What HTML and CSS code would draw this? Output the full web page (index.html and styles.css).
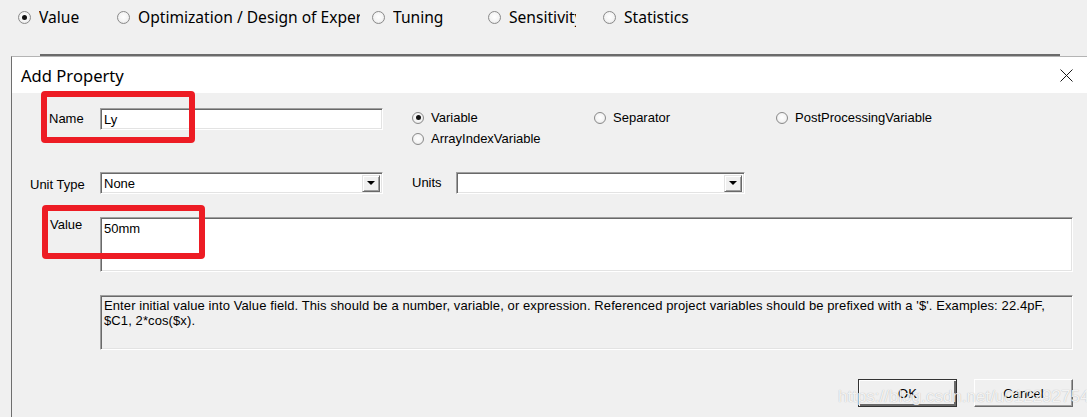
FILE: index.html
```html
<!DOCTYPE html>
<html>
<head>
<meta charset="utf-8">
<link rel="stylesheet" href="styles.css">
</head>
<body>
<div class="topbar">
  <div class="topitem w-value"><span class="tradio checked"></span><span class="tlabel l-value">Value</span></div>
  <div class="topitem w-opt"><span class="tradio"></span><span class="tlabel l-opt">Optimization / Design of Experiments</span></div>
  <div class="topitem w-tun"><span class="tradio"></span><span class="tlabel l-tun">Tuning</span></div>
  <div class="topitem w-sen"><span class="tradio"></span><span class="tlabel l-sen">Sensitivity</span></div>
  <div class="topitem"><span class="tradio"></span><span class="tlabel">Statistics</span></div>
</div>
<div class="backline"></div>
<div class="dialog">
  <div class="titlebar">
    <span class="title">Add Property</span>
    <svg class="close" width="13" height="13" viewBox="0 0 13 13"><path d="M0.5 0.5 L12.5 12.5 M12.5 0.5 L0.5 12.5" stroke="#1a1a1a" stroke-width="1" fill="none"/></svg>
  </div>
  <div class="body">
    <div class="row row1">
      <span class="lbl lbl-name">Name</span>
      <div class="field input w-name">Ly</div>
      <div class="radios">
        <div class="ritem"><span class="radio checked"></span>Variable</div>
        <div class="ritem"><span class="radio"></span>Separator</div>
        <div class="ritem"><span class="radio"></span>PostProcessingVariable</div>
        <div class="ritem"><span class="radio"></span>ArrayIndexVariable</div>
      </div>
    </div>
    <div class="row row2">
      <span class="lbl lbl-unit">Unit Type</span>
      <div class="field select w-name"><span class="seltext">None</span><span class="dd"><span class="tri"></span></span></div>
      <span class="lbl lbl-units">Units</span>
      <div class="field select w-units"><span class="seltext"></span><span class="dd"><span class="tri"></span></span></div>
    </div>
    <div class="row row3">
      <span class="lbl lbl-value">Value</span>
      <div class="field textarea">50mm</div>
    </div>
    <div class="help">Enter initial value into Value field. This should be a number, variable, or expression. Referenced project variables should be prefixed with a '$'. Examples: 22.4pF,<br>$C1, 2*cos($x).</div>
    <div class="buttons">
      <div class="btn default">OK</div>
      <div class="btn">Cancel</div>
    </div>
  </div>
  <div class="redbox rb1"></div>
  <div class="redbox rb2"></div>
  <div class="watermark">https://blog.csdn.net/u012292754</div>
</div>
</body>
</html>
```
FILE: styles.css
```css
html, body {
  margin: 0;
  padding: 0;
  background: #f0f0f0;
  width: 1087px;
  height: 417px;
  overflow: hidden;
}
.topbar {
  display: flex;
  align-items: center;
  height: 34px;
  padding-left: 18px;
  font-family: "Noto Sans", "Open Sans", sans-serif;
  font-size: 15.6px;
  color: #000;
}
.topitem {
  display: flex;
  align-items: center;
  white-space: nowrap;
}
.w-value { width: 99px; }
.w-opt { width: 255px; }
.w-tun { width: 116px; }
.w-sen { width: 115px; }
.tlabel {
  margin-left: 8px;
  overflow: hidden;
  display: block;
}
.l-opt { width: 222px; }
.l-sen { width: 67px; }
.tradio {
  width: 11px;
  height: 11px;
  border-radius: 50%;
  border: 1px solid #8a8a8a;
  background: radial-gradient(circle at 50% 45%, #ffffff 0%, #f4f4f4 55%, #d6d6d6 100%);
  position: relative;
  flex: none;
}
.tradio.checked::after,
.radio.checked::after {
  content: "";
  position: absolute;
  left: 3px;
  top: 3px;
  width: 5px;
  height: 5px;
  border-radius: 50%;
  background: #111;
}
.backline {
  margin-top: 20px;
  margin-left: 40px;
  width: 1020px;
  height: 2px;
  background: #6b6b6b;
}
.dialog {
  position: relative;
  margin-left: 11px;
  border-left: 1px solid #6e6e6e;
  border-top: 1px solid #b4b4b4;
  height: 360px;
  background: #f0f0f0;
}
.titlebar {
  height: 36px;
  background: #fff;
  display: flex;
  align-items: center;
  justify-content: space-between;
  padding-left: 9px;
  padding-right: 14px;
}
.title {
  font-family: "Noto Sans", "Open Sans", sans-serif;
  font-size: 16.6px;
  color: #000;
}
.body {
  font-family: "Liberation Sans", Arial, sans-serif;
  font-size: 13px;
  color: #000;
}
.row {
  display: flex;
  align-items: flex-start;
}
.row1 { margin-top: 15px; height: 41px; }
.row2 { margin-top: 23px; }
.row3 { margin-top: 23px; }
.lbl { display: block; }
.lbl-name { margin-left: 37px; width: 51px; padding-top: 3px; }
.lbl-unit { margin-left: 18px; width: 70px; padding-top: 5px; }
.lbl-units { margin-left: 29px; width: 44px; padding-top: 3px; }
.lbl-value { margin-left: 38px; width: 50px; padding-top: 0; }
.field {
  box-sizing: border-box;
  background: #fff;
  border-top: 1px solid #a0a0a0;
  border-left: 1px solid #a0a0a0;
  border-right: 1px solid #fff;
  border-bottom: 1px solid #fff;
  box-shadow: inset 1px 1px 0 #696969, inset -1px -1px 0 #e3e3e3;
}
.input {
  height: 22px;
  padding: 3px 3px 0 3px;
}
.w-name { width: 283px; }
.w-units { width: 289px; }
.select {
  height: 22px;
  display: flex;
  align-items: center;
  justify-content: space-between;
  padding: 0 2px 0 3px;
}
.dd {
  box-sizing: border-box;
  width: 18px;
  height: 17px;
  background: #f0f0f0;
  border-top: 1px solid #e3e3e3;
  border-left: 1px solid #e3e3e3;
  border-right: 1px solid #696969;
  border-bottom: 1px solid #696969;
  box-shadow: inset 1px 1px 0 #fff, inset -1px -1px 0 #a0a0a0;
  display: flex;
  align-items: center;
  justify-content: center;
}
.tri {
  width: 0;
  height: 0;
  border-left: 4px solid transparent;
  border-right: 4px solid transparent;
  border-top: 4px solid #000;
}
.radios {
  margin-left: 29px;
  margin-top: -1px;
  display: grid;
  grid-template-columns: 182px 182px auto;
  grid-auto-rows: 21px;
}
.ritem {
  display: flex;
  align-items: center;
  white-space: nowrap;
}
.radio {
  width: 10px;
  height: 10px;
  border-radius: 50%;
  border: 1px solid #8a8a8a;
  background: radial-gradient(circle at 50% 45%, #ffffff 0%, #f4f4f4 55%, #d6d6d6 100%);
  position: relative;
  margin-right: 7px;
  flex: none;
}
.radio.checked::after {
  left: 2.5px;
  top: 2.5px;
}
.textarea {
  width: 973px;
  height: 55px;
  padding: 3px 3px;
}
.help {
  box-sizing: border-box;
  margin-top: 23px;
  margin-left: 88px;
  width: 973px;
  height: 55px;
  padding: 2px 3px;
  font-size: 13px;
  letter-spacing: 0.1px;
  line-height: 15px;
  white-space: nowrap;
  border-top: 1px solid #a0a0a0;
  border-left: 1px solid #a0a0a0;
  border-right: 1px solid #fff;
  border-bottom: 1px solid #fff;
  box-shadow: inset 1px 1px 0 #696969, inset -1px -1px 0 #e3e3e3;
}
.buttons {
  display: flex;
  margin-top: 29px;
  margin-left: 846px;
  gap: 17px;
}
.btn {
  box-sizing: border-box;
  width: 99px;
  height: 28px;
  display: flex;
  align-items: center;
  justify-content: center;
  background: #f0f0f0;
  border-top: 1px solid #fff;
  border-left: 1px solid #fff;
  border-right: 1px solid #696969;
  border-bottom: 1px solid #696969;
  box-shadow: inset -1px -1px 0 #a0a0a0;
}
.btn.default {
  border: 1px solid #333;
  box-shadow: inset 1px 1px 0 #fff, inset -2px -2px 0 #696969;
}
.redbox {
  position: absolute;
  box-sizing: border-box;
  border: 6px solid #ed1c24;
  border-radius: 4px;
}
.rb1 { left: 29px; top: 34px; width: 154px; height: 52px; }
.rb2 { left: 30px; top: 148px; width: 163px; height: 54px; }
.watermark {
  position: absolute;
  left: 826px;
  top: 330px;
  font-family: "Liberation Sans", Arial, sans-serif;
  font-size: 17px;
  color: rgba(255, 255, 255, 0.85);
  text-shadow: 0 0 1px rgba(0, 0, 0, 0.3);
  white-space: nowrap;
}
```
